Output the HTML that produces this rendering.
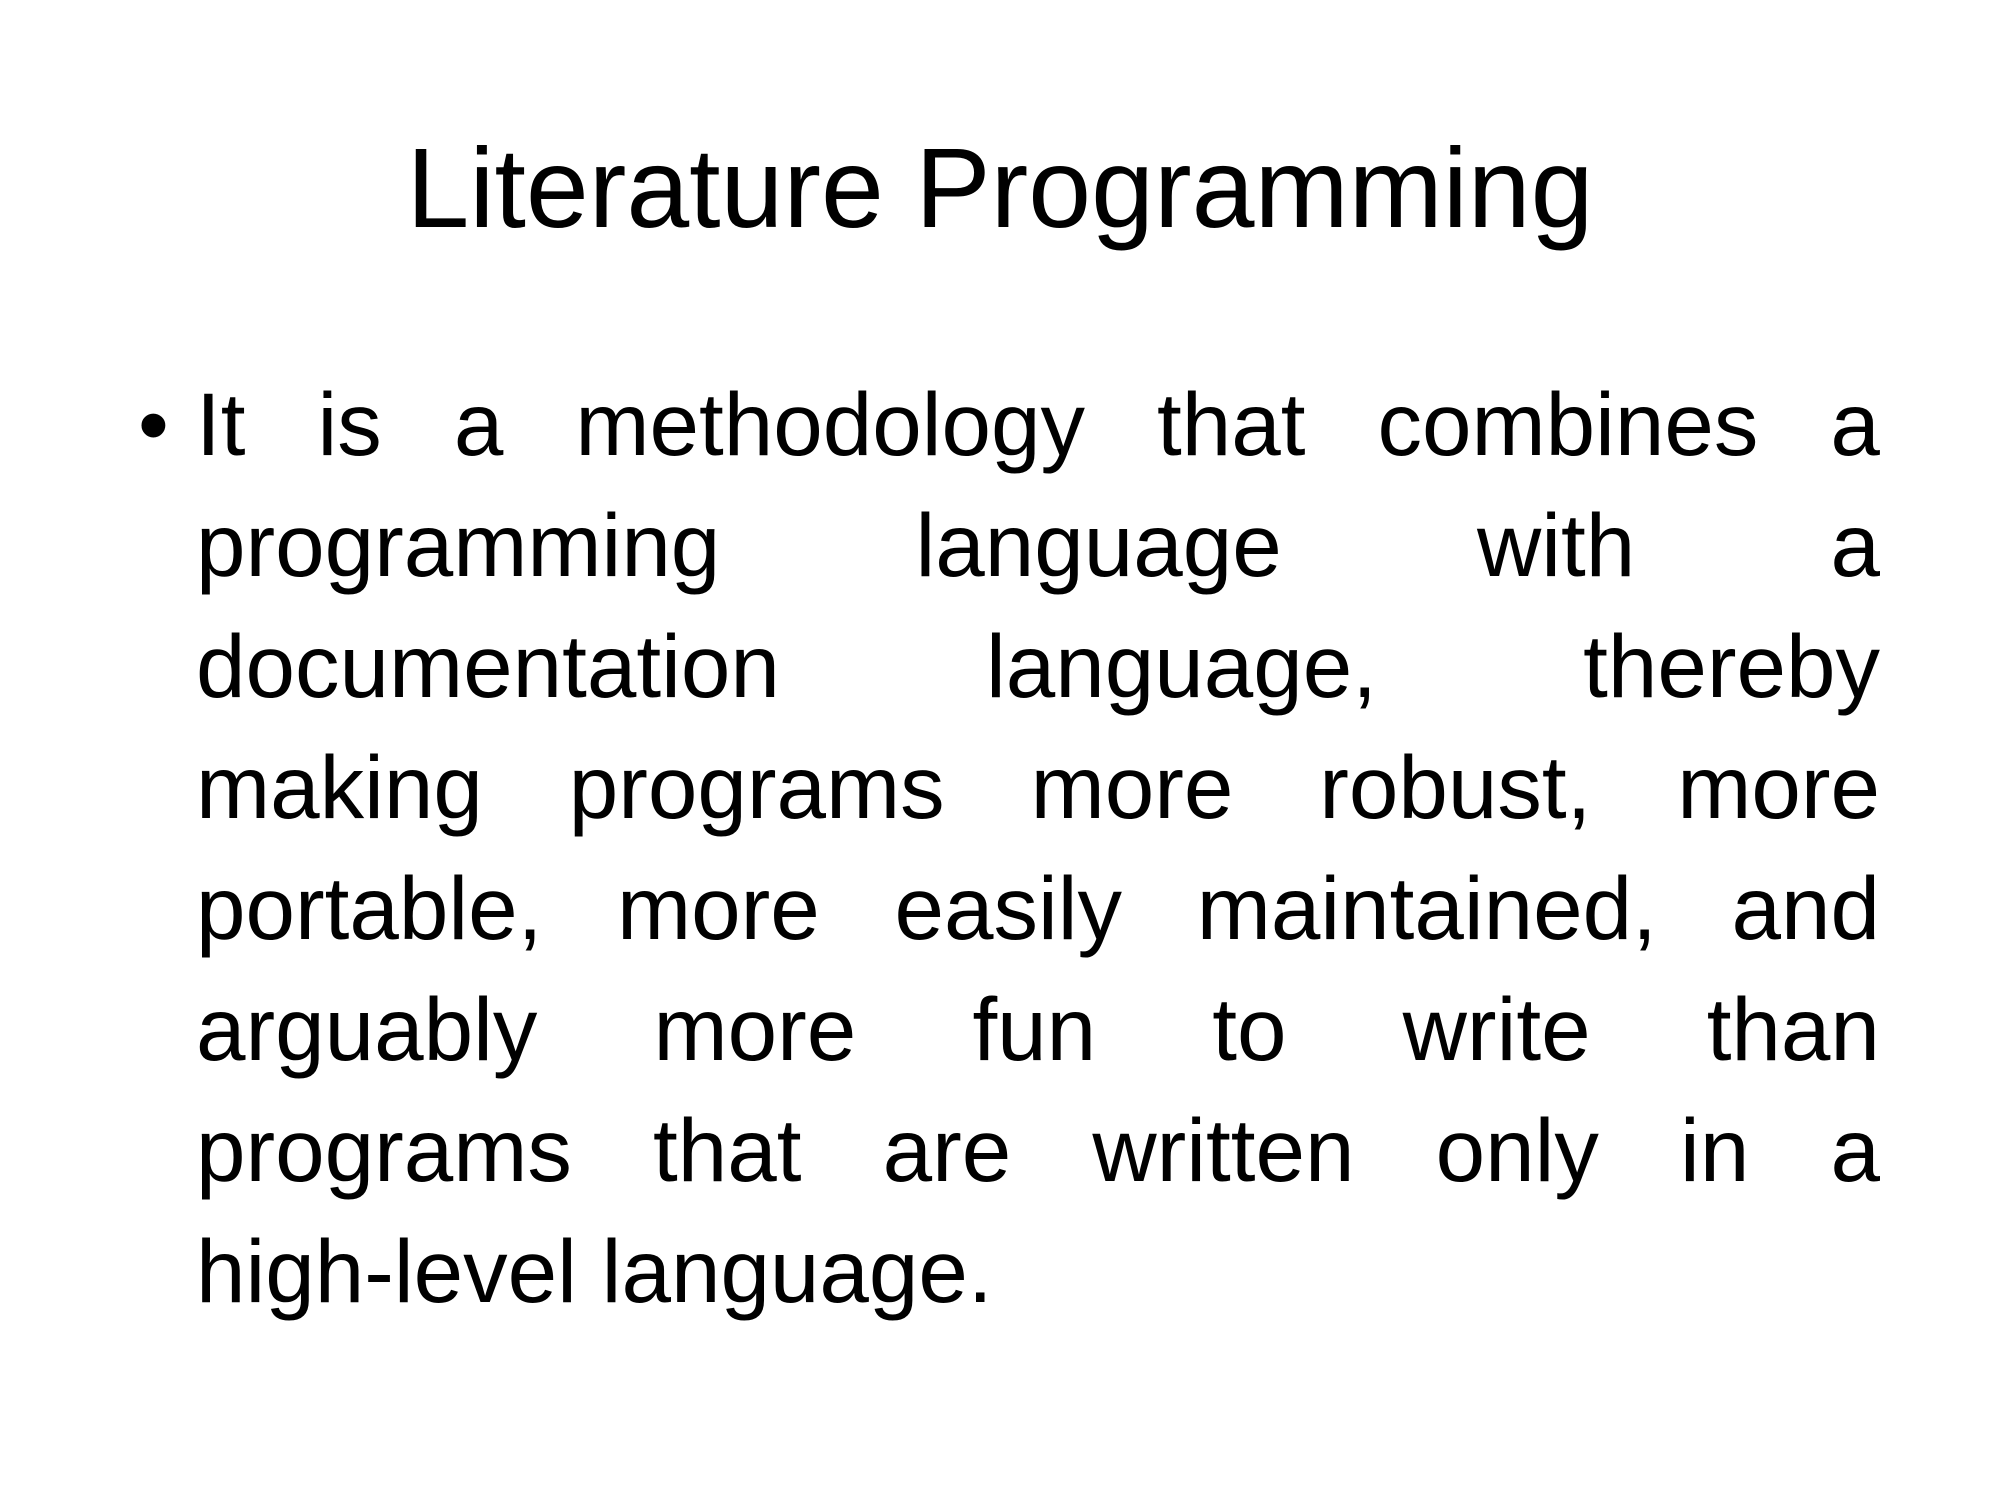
<!DOCTYPE html>
<html><head><meta charset="utf-8"><style>
html,body{margin:0;padding:0;background:#fff;}
body{width:2000px;height:1500px;position:relative;overflow:hidden;font-family:"Liberation Sans",sans-serif;color:#000;}
.title{position:absolute;left:0;width:2000px;top:123px;text-align:center;font-size:113px;line-height:130px;}
.line{position:absolute;left:196px;width:1684px;font-size:89px;line-height:121px;height:121px;display:flex;justify-content:space-between;white-space:nowrap;}
.last{justify-content:flex-start;}
.bullet{position:absolute;left:138px;top:364px;font-size:88px;line-height:121px;}
</style></head><body>
<div class="title">Literature Programming</div>
<div class="bullet">•</div>
<div class="line" style="top:364px"><span>It</span><span>is</span><span>a</span><span>methodology</span><span>that</span><span>combines</span><span>a</span></div>
<div class="line" style="top:485px"><span>programming</span><span>language</span><span>with</span><span>a</span></div>
<div class="line" style="top:606px"><span>documentation</span><span>language,</span><span>thereby</span></div>
<div class="line" style="top:727px"><span>making</span><span>programs</span><span>more</span><span>robust,</span><span>more</span></div>
<div class="line" style="top:848px"><span>portable,</span><span>more</span><span>easily</span><span>maintained,</span><span>and</span></div>
<div class="line" style="top:969px"><span>arguably</span><span>more</span><span>fun</span><span>to</span><span>write</span><span>than</span></div>
<div class="line" style="top:1090px"><span>programs</span><span>that</span><span>are</span><span>written</span><span>only</span><span>in</span><span>a</span></div>
<div class="line last" style="top:1211px"><span>high-level language.</span></div>
</body></html>
